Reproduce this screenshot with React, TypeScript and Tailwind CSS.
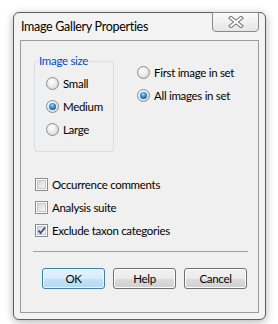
import React from 'react';

const font = { fontFamily: 'Lato, "Open Sans", sans-serif' };

function Radio({ checked, label }: { checked?: boolean; label: string }) {
  return (
    <div className="flex h-[23px] items-center gap-[4px]">
      <div className="flex h-[13px] w-[13px] items-center justify-center rounded-full border border-[#8c8c8c] bg-[radial-gradient(circle_at_40%_35%,#ffffff_0%,#ececec_45%,#c9c9c9_100%)]">
        {checked && (
          <div className="h-[7px] w-[7px] rounded-full bg-[radial-gradient(circle_at_45%_35%,#9fe0ff_0%,#2a85cf_45%,#0c3f7a_100%)]" />
        )}
      </div>
      <span>{label}</span>
    </div>
  );
}

function Check({ checked, label }: { checked?: boolean; label: string }) {
  return (
    <div className="flex h-[23px] items-center gap-[4px]">
      <div className="flex h-[13px] w-[13px] items-center justify-center border border-[#8c8c8c] bg-white">
        <div className="h-[9px] w-[9px] border border-[#c6c6c6] bg-[linear-gradient(135deg,#d6d6d6,#f7f7f7)]">
          {checked && (
            <svg width="9" height="9" viewBox="0 0 9 9" className="-ml-px -mt-px">
              <path d="M1.5 4.5 L3.6 7 L8 1.5" fill="none" stroke="#2f4e9e" strokeWidth="1.8" />
            </svg>
          )}
        </div>
      </div>
      <span>{label}</span>
    </div>
  );
}

function Button({ label, primary }: { label: string; primary?: boolean }) {
  return (
    <div
      className={
        primary
          ? 'flex h-[21px] w-[63px] items-center justify-center rounded-[3px] border border-[#3c7fb1] bg-[linear-gradient(to_bottom,#e5f3fc_0%,#d7ecfb_50%,#c2e2f8_50%,#b3d9f4_100%)] shadow-[inset_0_0_0_1px_#eaf6fd]'
          : 'flex h-[21px] w-[63px] items-center justify-center rounded-[3px] border border-[#707070] bg-[linear-gradient(to_bottom,#f2f2f2_0%,#ebebeb_50%,#dddddd_50%,#cfcfcf_100%)] shadow-[inset_0_0_0_1px_#fcfcfc]'
      }
    >
      {label}
    </div>
  );
}

export default function App() {
  return (
    <div className="h-[324px] w-[278px] bg-white pl-[13px] pt-[12px] text-[11.5px] tracking-[-0.3px] text-black" style={font}>
      {/* window frame */}
      <div className="flex h-[308px] w-[253px] flex-col rounded-[6px] border border-[#5e5e5e] bg-[#f3f3f3] px-[6px] shadow-[0_2px_8px_rgba(0,0,0,0.3)]">
        {/* title bar */}
        <div className="flex h-[27px] items-start justify-between">
          <span className="pl-[1px] pt-[6px] text-[12.5px] leading-[16px]">Image Gallery Properties</span>
          <div className="-mt-px flex h-[20px] w-[47px] items-center justify-center rounded-b-[4px] border border-[#8a8a8a] bg-[linear-gradient(to_bottom,#fafafa,#e6e6e6)]">
            <svg width="16" height="12" viewBox="0 0 16 12">
              <path d="M3 2 L13 10 M13 2 L3 10" stroke="#6e6e6e" strokeWidth="4" strokeLinecap="square" />
              <path d="M3 2 L13 10 M13 2 L3 10" stroke="#ffffff" strokeWidth="2" strokeLinecap="square" />
            </svg>
          </div>
        </div>

        {/* client area */}
        <div className="flex h-[273px] flex-col border border-[#9a9a9a] bg-[#f0f0f0]">
          <div className="flex pt-[20px]">
            <div className="relative ml-[13px] h-[91px] w-[80px] rounded-[3px] border border-[#d5dfe5]">
              <span className="absolute left-[3px] top-[-9px] bg-[#f0f0f0] px-[1px] leading-[15px] text-[#0046d5]">Image size</span>
              <div className="flex flex-col pl-[11px] pt-[10px]">
                <Radio label="Small" />
                <Radio label="Medium" checked />
                <Radio label="Large" />
              </div>
            </div>
            <div className="ml-[23px] flex flex-col">
              <Radio label="First image in set" />
              <Radio label="All images in set" checked />
            </div>
          </div>

          <div className="ml-[14px] mt-[21px] flex flex-col">
            <Check label="Occurrence comments" />
            <Check label="Analysis suite" />
            <Check label="Exclude taxon categories" checked />
          </div>

          <div className="ml-[12px] mr-[10px] mt-[9px] h-px bg-[#a0a0a0]" />

          <div className="ml-[21px] mt-[16px] flex gap-[8px]">
            <Button label="OK" primary />
            <Button label="Help" />
            <Button label="Cancel" />
          </div>
        </div>
      </div>
    </div>
  );
}
